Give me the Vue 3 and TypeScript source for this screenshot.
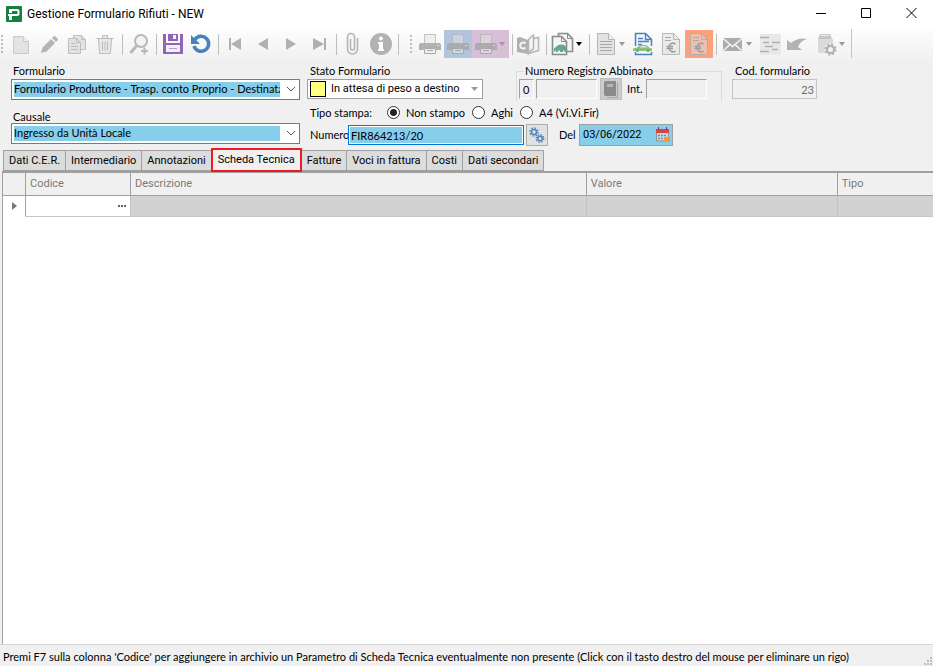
<script setup lang="ts">
import { ref } from 'vue'

interface Tool {
  icon?: string
  label?: string
  kind?: 'sep' | 'grip'
  drop?: boolean
  strong?: boolean
  tone?: string
}

const mainTools: Tool[] = [
  { kind: 'grip' },
  { icon: 'new', label: 'Nuovo' },
  { icon: 'edit', label: 'Modifica' },
  { icon: 'copy', label: 'Duplica' },
  { icon: 'trash', label: 'Elimina' },
  { kind: 'sep' },
  { icon: 'search', label: 'Cerca' },
  { kind: 'sep' },
  { icon: 'save', label: 'Salva' },
  { icon: 'undo', label: 'Annulla' },
  { kind: 'sep' },
  { icon: 'first', label: 'Primo' },
  { icon: 'prev', label: 'Precedente' },
  { icon: 'next', label: 'Successivo' },
  { icon: 'last', label: 'Ultimo' },
  { kind: 'sep' },
  { icon: 'clip', label: 'Allegati' },
  { icon: 'info', label: 'Informazioni' },
  { kind: 'sep' },
]

const extraTools: Tool[] = [
  { kind: 'grip' },
  { icon: 'print', label: 'Stampa' },
  { icon: 'print', label: 'Stampa formulario', tone: 'blue' },
  { icon: 'print', label: 'Stampa registro', tone: 'mauve', drop: true },
  { kind: 'sep' },
  { icon: 'book', label: 'Registro' },
  { kind: 'sep' },
  { icon: 'cards', label: 'Documenti collegati', drop: true, strong: true },
  { kind: 'sep' },
  { icon: 'doc', label: 'Documento', drop: true },
  { icon: 'car', label: 'Trasporto' },
  { icon: 'euro', label: 'Fattura' },
  { icon: 'euro', label: 'Fattura fornitore', tone: 'orange' },
  { kind: 'sep' },
  { icon: 'mail', label: 'Invia', drop: true },
  { icon: 'list', label: 'Dettaglio' },
  { icon: 'back', label: 'Ripristina' },
  { icon: 'setup', label: 'Impostazioni', drop: true },
]

const printModes = ['Non stampo', 'Aghi', 'A4 (Vi.Vi.Fir)']
const printMode = ref('Non stampo')
const numero = ref('FIR864213/20')
const data = ref('03/06/2022')

const tabs = ['Dati C.E.R.', 'Intermediario', 'Annotazioni', 'Scheda Tecnica', 'Fatture', 'Voci in fattura', 'Costi', 'Dati secondari']
const activeTab = ref('Scheda Tecnica')
</script>

<template>
  <div class="window">
    <svg class="sprite" aria-hidden="true">
      <symbol id="i-new" viewBox="0 0 24 24">
        <path d="M4.500 4.500h10l5 5v12h-15z" fill="#e3e3e3" stroke="#cacaca" /><path d="M14.500 4.500v5h5" fill="#f0f0f0" stroke="#cacaca" />
      </symbol>
      <symbol id="i-edit" viewBox="0 0 24 24">
        <path d="M4 21l1.500-5.500L14 7l4 4-8.500 8.500zM15 6l1.500-1.500q1-1 2 0L20.500 6.500q1 1 0 2L19 10z" fill="#b5b5b5" />
      </symbol>
      <symbol id="i-copy" viewBox="0 0 24 24">
        <path d="M8.500 3.500h8l4 4v10h-12z" fill="#e2e2e2" stroke="#c0c0c0" /><path d="M16.500 3.500v4h4" fill="none" stroke="#c0c0c0" />
        <path d="M3.500 6.500h8l4 4v11h-12z" fill="#e2e2e2" stroke="#bdbdbd" /><path d="M11.500 6.500v4h4M6 11.500h4M6 14.500h7M6 17.500h7" fill="none" stroke="#bdbdbd" />
      </symbol>
      <symbol id="i-trash" viewBox="0 0 24 24">
        <path d="M9.500 6V3.500h5V6M3.500 6.500h17M5.500 7l1 14.500h11l1-14.500" fill="#e8e8e8" stroke="#bcbcbc" /><path d="M9.500 9.500v9M12 9.500v9M14.500 9.500v9" stroke="#bcbcbc" />
      </symbol>
      <symbol id="i-search" viewBox="0 0 24 24">
        <circle cx="14" cy="9" r="6" fill="#f3f3f3" stroke="#b8b8b8" stroke-width="2" /><path d="M9.500 14l-6 7" stroke="#b8b8b8" stroke-width="3" /><path d="M17.500 15.500v7M14 19h7" stroke="#b8b8b8" stroke-width="2" />
      </symbol>
      <symbol id="i-save" viewBox="0 0 24 24">
        <path d="M2 2h3v9h14V2h3v20H2z" fill="#9065b4" /><path d="M7 2h10v7H7z" fill="#9065b4" /><path d="M12 3h3v4h-3z" fill="#f4eef8" /><path d="M5 13h14v7H5z" fill="#f4eef8" /><path d="M8 16.500h8" stroke="#b99bd0" />
      </symbol>
      <symbol id="i-undo" viewBox="0 0 24 24">
        <path d="M6 7.500A7.500 7.500 0 1 1 5 14" fill="none" stroke="#4583bd" stroke-width="3.500" /><path d="M2 3v9h9z" fill="#4583bd" />
      </symbol>
      <symbol id="i-first" viewBox="0 0 24 24"><path d="M6 6h2v12H6zM18 6v12L8 12z" fill="#b0b0b0" /></symbol>
      <symbol id="i-prev" viewBox="0 0 24 24"><path d="M17 6v12L7 12z" fill="#b0b0b0" /></symbol>
      <symbol id="i-next" viewBox="0 0 24 24"><path d="M7 6v12l10-6z" fill="#b0b0b0" /></symbol>
      <symbol id="i-last" viewBox="0 0 24 24"><path d="M17 6h2v12h-2zM6 6v12l11-6z" fill="#b0b0b0" /></symbol>
      <symbol id="i-clip" viewBox="0 0 24 24">
        <path d="M16.500 6v11a5 5 0 0 1-10 0V5a3.500 3.500 0 0 1 7 0v11a2 2 0 0 1-4 0V7" fill="none" stroke="#b4b4b4" stroke-width="1.600" />
      </symbol>
      <symbol id="i-info" viewBox="0 0 24 24">
        <circle cx="12" cy="12" r="11" fill="#b2b2b2" /><circle cx="12" cy="6.500" r="2" fill="#fff" /><path d="M9 10h5v7h1v2H9v-2h1v-5H9z" fill="#fff" />
      </symbol>
      <symbol id="i-print" viewBox="0 0 24 24">
        <path d="M6.500 11V2.500h11V11" fill="#e4e4e4" fill-opacity=".5" stroke="#b4b4b4" stroke-opacity=".8" /><path d="M1 13q0-2 2-2h18q2 0 2 2v5h-5v-2H6v2H1z" fill="#a8a8a8" fill-opacity=".9" /><path d="M6.500 16.500h11v5h-11z" fill="#ececec" fill-opacity=".5" stroke="#a8a8a8" /><path d="M9 18.500h6" stroke="#a8a8a8" /><path d="M19 13.500h2" stroke="#ddd" />
      </symbol>
      <symbol id="i-book" viewBox="0 0 24 24">
        <path d="M0 6l3-1 8 3v14L0 20z" fill="#b0b0b0" /><path d="M8.500 11.500a3 3 0 1 0 0 4" fill="none" stroke="#f4f4f4" stroke-width="2" /><path d="M11.500 21.500V8q2-3 5-5v14q-3 1-5 4.500zM16.500 6.500l5-1v13l-10 3" fill="#f4f4f4" stroke="#b4b4b4" stroke-width="1.500" />
      </symbol>
      <symbol id="i-cards" viewBox="0 0 24 24">
        <path d="M7.500 1.500h9l5 5v13h-14z" fill="#f5f5f5" stroke="#8b8b8b" stroke-width="1.600" /><path d="M16.500 1.500v5h5" fill="none" stroke="#8b8b8b" />
        <path d="M1.500 4.500h9l5 5v13h-14z" fill="#f5f5f5" stroke="#8b8b8b" stroke-width="1.600" /><path d="M10.500 4.500v5h5" fill="none" stroke="#8b8b8b" />
        <path d="M3 20q-1-4 2-5 1-2 5-2.500 4.500 0 5 3l1 4.500h-2l-1-1.500h-1V20H9v-1.500H7V20H5v-2z" fill="#62a88c" />
      </symbol>
      <symbol id="i-doc" viewBox="0 0 24 24">
        <path d="M3.500 1.500h11l6 6v15h-17z" fill="#e2e2e2" stroke="#b5b5b5" /><path d="M14.500 1.500v6h6" fill="#efefef" stroke="#b5b5b5" /><path d="M6 9.500h12M6 12.500h12M6 15.500h12M6 18.500h12" stroke="#a9a9a9" />
      </symbol>
      <symbol id="i-car" viewBox="0 0 24 24">
        <path d="M4.500 14V1.500h10l6 6V14M4.500 20v2.500h16V20" fill="#f1f5fa" stroke="#4583bd" stroke-width="1.500" /><path d="M14.500 1.500v6h6M7 6.500h5M7 9.500h11M7 12.500h4" fill="none" stroke="#4583bd" stroke-width="1.300" /><path d="M2 19v-2q1-1.500 4-1.500 2-2.500 5-2.500h4l4 3 2 .500v2.500z" fill="#8cc07a" /><path d="M8.500 15.500l2-1.500h4l2 1.500z" fill="#dcebd6" /><circle cx="6.500" cy="18.500" r="1.500" fill="#74ad60" /><circle cx="17" cy="18.500" r="1.500" fill="#74ad60" />
      </symbol>
      <symbol id="i-euro" viewBox="0 0 24 24">
        <path d="M3.500 1.500h11l6 6v15h-17z" fill="#dedede" fill-opacity=".5" stroke="#aaa" stroke-opacity=".8" /><path d="M14.500 1.500v6h6" fill="none" stroke="#aaa" stroke-opacity=".8" /><path d="M6 5.500h6M6 8.500h6" stroke="#aaa" />
        <path d="M16.500 12a4.200 4.200 0 1 0 0 7M7.500 14.500h6.500M7.500 16.500h6.500" fill="none" stroke="#9e9e9e" stroke-width="1.500" />
      </symbol>
      <symbol id="i-mail" viewBox="0 0 24 24">
        <path d="M2 6h19v13H2z" fill="#acacac" /><path d="M2 6.500l9.500 8 9.500-8M2.500 18.500l6.500-6M20.500 18.500L14 12.500" fill="none" stroke="#f5f5f5" stroke-width="1.500" />
      </symbol>
      <symbol id="i-list" viewBox="0 0 24 24">
        <path d="M2 2h21v21H2z" fill="#e8e8e8" /><path d="M2 5.500h9M5 10.500h6M7 14.500h8M2 19.500h9M14 10.500h8M14 17.500h6" stroke="#b0b0b0" stroke-width="1.500" />
      </symbol>
      <symbol id="i-back" viewBox="0 0 24 24">
        <path d="M1 8l4 3q7-6 16-4-7 2-9 8l4 3H1z" fill="#b3b3b3" />
      </symbol>
      <symbol id="i-setup" viewBox="0 0 24 24">
        <path d="M6 2h10l2 5H4z" fill="#c6c6c6" /><path d="M4 7h15v14H4z" fill="#dadada" /><path d="M7 3.500h8" stroke="#eee" />
        <circle cx="16.500" cy="17.500" r="6" fill="#f0f0f0" /><circle cx="16.500" cy="17.500" r="3.500" fill="#f4f4f4" stroke="#b0b0b0" stroke-width="2" /><circle cx="16.500" cy="17.500" r="5" fill="none" stroke="#b0b0b0" stroke-width="2" stroke-dasharray="2 1.927" />
      </symbol>
    </svg>

    <header class="titlebar">
      <svg class="logo" viewBox="0 0 16 16" aria-hidden="true">
        <rect width="16" height="16" rx="1" fill="#13823f" />
        <path d="M4 4h7q1.500 0 1.500 1.500v2q0 1.500-1.500 1.500H2" fill="none" stroke="#fff" stroke-width="2" /><path d="M3 3h3v4H3zM3 9h3v5H3z" fill="#fff" />
      </svg>
      <h1>Gestione Formulario Rifiuti - NEW</h1>
      <div class="caption">
        <button type="button" aria-label="Riduci a icona"><svg viewBox="0 0 12 12"><path d="M1 5.500h10" /></svg></button>
        <button type="button" aria-label="Ingrandisci"><svg viewBox="0 0 12 12"><path d="M1.500 .500h9v9h-9z" /></svg></button>
        <button type="button" aria-label="Chiudi"><svg viewBox="0 0 12 12"><path d="M1.500 0l10 10M11.500 0l-10 10" /></svg></button>
      </div>
    </header>

    <nav class="toolbar">
      <div v-for="(group, g) in [mainTools, extraTools]" :key="g" class="strip">
        <template v-for="(t, i) in group" :key="i">
          <span v-if="t.kind" :class="t.kind"></span>
          <button v-else type="button" class="tool" :class="t.tone" :aria-label="t.label">
            <svg class="glyph"><use :href="'#i-' + t.icon" /></svg>
            <span v-if="t.drop" class="drop" :class="{ strong: t.strong }"></span>
          </button>
        </template>
      </div>
    </nav>

    <form class="form" @submit.prevent>
      <div class="left">
        <label for="formulario">Formulario</label>
        <div class="combo">
          <select id="formulario"><option>Formulario Produttore - Trasp. conto Proprio - Destinatario</option></select>
          <svg viewBox="0 0 10 6"><path d="M1 1l4 4 4-4" /></svg>
        </div>
        <label for="causale" class="second">Causale</label>
        <div class="combo">
          <select id="causale"><option>Ingresso da Unità Locale</option></select>
          <svg viewBox="0 0 10 6"><path d="M1 1l4 4 4-4" /></svg>
        </div>
      </div>

      <div class="right">
        <div class="row top">
          <div class="stato">
            <label for="stato">Stato Formulario</label>
            <div class="state">
              <span class="swatch"></span>
              <select id="stato"><option>In attesa di peso a destino</option></select>
              <span class="drop"></span>
            </div>
          </div>
          <fieldset class="registro">
            <legend>Numero Registro Abbinato</legend>
            <input class="sunk tiny" value="0" aria-label="Registro">
            <input class="sunk" aria-label="Numero registro">
            <button type="button" class="bookbtn" aria-label="Apri registro">
              <svg viewBox="0 0 16 18"><path d="M3 1h10v15H3q-2 0-2-2V3q0-2 2-2z" fill="#8b8b8b" /><path d="M14.500 3v14.500H4" fill="none" stroke="#a5a5a5" /><path d="M4 4h6v3H4z" fill="#b8b8b8" /></svg>
            </button>
            <label for="interno">Int.</label>
            <input id="interno" class="sunk">
          </fieldset>
          <div class="cod">
            <label for="cod">Cod. formulario</label>
            <input id="cod" value="23" disabled>
          </div>
        </div>

        <div class="row modes" role="radiogroup" aria-label="Tipo stampa">
          <span class="lead">Tipo stampa:</span>
          <label v-for="m in printModes" :key="m"><input v-model="printMode" type="radio" name="stampa" :value="m">{{ m }}</label>
        </div>

        <div class="row bottom">
          <label for="numero">Numero</label>
          <input id="numero" v-model="numero" class="numero">
          <button type="button" class="gears" aria-label="Genera numero">
            <svg viewBox="0 0 16 16" fill="none" stroke="#4f86bd">
              <circle cx="5" cy="5" r="2.500" stroke-width="1.500" /><circle cx="5" cy="5" r="4" stroke-width="1.500" stroke-dasharray="1.500 1.640" />
              <circle cx="11" cy="11.500" r="2.300" stroke-width="1.500" /><circle cx="11" cy="11.500" r="3.700" stroke-width="1.500" stroke-dasharray="1.500 1.400" />
            </svg>
          </button>
          <label for="data" class="del">Del</label>
          <div class="date">
            <input id="data" v-model="data">
            <svg viewBox="0 0 16 16" aria-hidden="true">
              <path d="M1.500 3h12v11h-12z" fill="#c3dbe5" stroke="#8d9499" /><path d="M1 2h13v4H1z" fill="#d5434f" /><path d="M3.500 0v3M11.500 0v3" stroke="#8b3a42" /><path d="M3 8.500h9M3 11.500h6" stroke="#808a90" stroke-width="1.500" stroke-dasharray="2 1" /><path d="M9 10h6v5H9z" fill="#f59a3c" />
            </svg>
          </div>
        </div>
      </div>
    </form>

    <div class="tabs" role="tablist">
      <button v-for="t in tabs" :key="t" type="button" role="tab" :aria-selected="t === activeTab" :class="{ active: t === activeTab }" @click="activeTab = t">{{ t }}</button>
    </div>

    <main class="sheet">
      <table>
        <colgroup><col class="c-mark"><col class="c-code"><col class="c-desc"><col class="c-val"><col></colgroup>
        <thead>
          <tr><th></th><th>Codice</th><th>Descrizione</th><th>Valore</th><th>Tipo</th></tr>
        </thead>
        <tbody>
          <tr>
            <td class="mark"><svg viewBox="0 0 5 8"><path d="M0 0v8l5-4z" /></svg></td>
            <td class="code"><button type="button" aria-label="Scegli codice"><i></i><i></i><i></i></button></td>
            <td></td><td></td><td></td>
          </tr>
        </tbody>
      </table>
    </main>

    <footer class="status">
      <span>Premi F7 sulla colonna 'Codice' per aggiungere in archivio un Parametro di Scheda Tecnica eventualmente non presente (Click con il tasto destro del mouse per eliminare un rigo)</span>
      <svg viewBox="0 0 9 9" aria-hidden="true"><path d="M6 0h2v2H6zM3 3h2v2H3zM6 3h2v2H6zM0 6h2v2H0zM3 6h2v2H3zM6 6h2v2H6z" /></svg>
    </footer>
  </div>
</template>

<style>
body {
  margin: 0;
  background: #f0f0f0;
}
</style>

<style scoped>
* {
  box-sizing: border-box;
}
.window {
  --line: #a0a0a0;
  --sky: #87ceeb;
  --narrow: Lato, "Noto Sans", sans-serif;
  --ui: Roboto, "Noto Sans", sans-serif;
  display: flex;
  flex-direction: column;
  min-height: 100vh;
  overflow: hidden;
  background: #f0f0f0;
  color: #000;
  font: 11px/14px var(--ui);
}
button,
input,
select {
  margin: 0;
  padding: 0;
  border: 0;
  border-radius: 0;
  background: none;
  color: inherit;
  font: inherit;
  min-width: 0;
}
select {
  appearance: none;
}
.sprite {
  position: absolute;
  width: 0;
  height: 0;
}

.titlebar {
  display: flex;
  align-items: center;
  height: 29px;
  padding: 0 0 2px 6px;
  background: #fff;
}
.logo {
  width: 16px;
  height: 16px;
}
h1 {
  flex: 1;
  margin: 0;
  padding-left: 5px;
  font-size: 12px;
  line-height: 16px;
  font-weight: 400;
}
.caption {
  display: flex;
}
.caption button {
  display: grid;
  place-items: center;
  width: 45px;
  height: 26px;
}
.caption svg {
  width: 12px;
  height: 12px;
  fill: none;
  stroke: #000;
}

.toolbar {
  display: flex;
  height: 33px;
  background: linear-gradient(#fdfdfd, #f0f0f0);
}
.strip {
  display: flex;
  padding-top: 1px;
}
.strip + .strip {
  height: 29px;
  padding-left: 8px;
  padding-right: 2px;
  border-right: 1px solid #c4c4c4;
}
.grip {
  width: 6px;
  height: 18px;
  margin: 5px 0 0 1px;
  background: repeating-linear-gradient(#bdbdbd 0 2px, transparent 2px 4px) 0 0 / 2px 100% no-repeat;
}
.sep {
  width: 1px;
  height: 21px;
  margin: 4px 2px 0 3px;
  background: #bcbcbc;
}
.tool {
  display: flex;
  align-items: center;
  height: 28px;
  padding: 0 2px;
}
.glyph {
  width: 24px;
  height: 24px;
}
.drop {
  flex: none;
  width: 7px;
  height: 4px;
  background: #9a9a9a;
  clip-path: polygon(0 0, 100% 0, 50% 100%);
}
.drop.strong {
  background: #000;
}
.tool .drop {
  width: 6px;
  margin: 0 2px 0 1px;
}
.blue {
  background: #b0c4de;
}
.mauve {
  background: #d8bfd8;
}
.orange {
  background: #ffa07a;
}

.form {
  display: flex;
  gap: 7px;
  padding: 1px 8px 1px 11px;
  font-family: var(--narrow);
}
.left {
  flex: 0 0 289px;
}
.left label {
  display: block;
  height: 16px;
  padding-left: 2px;
  line-height: 16px;
}
.left label.second {
  height: 14px;
  margin-top: 9px;
}
.combo {
  position: relative;
  height: 21px;
  border: 1px solid #7a7a7a;
  background: #fff;
}
.combo select {
  display: block;
  width: 100%;
  height: 19px;
  padding: 0 19px 1px 2px;
  background: linear-gradient(var(--sky), var(--sky)) 2px 2px / calc(100% - 21px) 15px no-repeat;
}
.combo svg {
  position: absolute;
  right: 3px;
  top: 6px;
  width: 10px;
  height: 6px;
  fill: none;
  stroke: #555;
  pointer-events: none;
}
.right {
  flex: 1;
  min-width: 0;
}
.row {
  display: flex;
  align-items: center;
}
.top {
  align-items: flex-start;
  height: 39px;
}
.stato {
  flex: 0 0 176px;
  margin-right: 33px;
}
.stato label,
.cod label {
  display: block;
  height: 16px;
  padding-left: 3px;
  line-height: 16px;
}
.state {
  display: flex;
  align-items: center;
  height: 20px;
  padding: 0 4px 0 2px;
  border: 1px solid var(--line);
  background: #fff;
  font-family: var(--ui);
}
.swatch {
  flex: none;
  width: 16px;
  height: 16px;
  border: 1px solid #000;
  background: #ffff80;
}
.state select {
  flex: 1;
  padding-left: 5px;
}
.registro {
  display: flex;
  align-items: center;
  flex: 0 0 206px;
  height: 37px;
  min-width: 0;
  margin: 1px 10px 0 0;
  padding: 0 2px 1px;
  border: 1px solid #dcdcdc;
  border-bottom: 0;
}
.registro legend {
  padding: 0 1px;
  margin-left: 5px;
}
.sunk {
  width: 61px;
  height: 20px;
  border: 1px solid #fff;
  border-top-color: #a0a0a0;
  border-left-color: #a0a0a0;
}
.sunk.tiny {
  width: 15px;
  margin-right: 2px;
  padding-left: 3px;
}
.bookbtn {
  display: grid;
  place-items: center;
  width: 22px;
  height: 22px;
  margin: 0 5px 0 3px;
  border: 1px solid #bfbfbf;
  background: #ccc;
}
.bookbtn svg {
  width: 16px;
  height: 18px;
}
.registro label {
  width: 19px;
}
.cod {
  flex: 0 0 85px;
}
.cod input {
  display: block;
  width: 100%;
  height: 20px;
  padding-right: 2px;
  border: 1px solid #c4c4c4;
  color: #6d6d6d;
  text-align: right;
}
.modes {
  height: 21px;
  padding-left: 3px;
}
.lead {
  width: 77px;
}
.modes label {
  display: flex;
  align-items: center;
  gap: 6px;
  margin-right: 7px;
}
.modes input {
  appearance: none;
  width: 13px;
  height: 13px;
  border: 1px solid #333;
  border-radius: 50%;
  background: #fff;
}
.modes input:checked {
  background: radial-gradient(circle, #222 3px, #fff 4px);
}
.bottom {
  height: 24px;
  padding-left: 3px;
}
.bottom > label {
  width: 38px;
}
.numero {
  flex: 0 0 176px;
  height: 20px;
  padding: 0 2px;
  border: 1px solid #0078d7;
  background: var(--sky);
  box-shadow: inset 0 0 0 1px #fff;
}
.gears {
  display: grid;
  place-items: center;
  width: 22px;
  height: 22px;
  margin-left: 2px;
  border: 1px solid #adadad;
  background: #e1e1e1;
}
.gears svg {
  width: 16px;
  height: 16px;
}
.bottom > .del {
  width: 20px;
  margin-left: 11px;
}
.date {
  display: flex;
  align-items: center;
  width: 94px;
  height: 22px;
  padding: 0 1px 0 3px;
  border: 1px solid var(--line);
  background: var(--sky);
  font-family: var(--ui);
}
.date input {
  flex: 1;
  width: 0;
}
.date svg {
  flex: none;
  width: 16px;
  height: 16px;
}

.tabs {
  display: flex;
  align-items: flex-end;
  height: 23px;
  padding-left: 3px;
}
.tabs button {
  height: 21px;
  margin-right: -1px;
  padding: 0 5px;
  border: 1px solid var(--line);
  background: #dcdcdc;
  white-space: nowrap;
}
.tabs .active {
  z-index: 1;
  height: 24px;
  margin-bottom: -1px;
  border: 2px solid #ed1c24;
  background: #f0f0f0;
}

.sheet {
  flex: 1;
  margin-left: 2px;
  border-top: 2px solid var(--line);
  border-left: 1px solid var(--line);
  background: #fff;
}
table {
  width: 100%;
  table-layout: fixed;
  border-collapse: separate;
  border-spacing: 0;
}
.c-mark {
  width: 23px;
}
.c-code {
  width: 105px;
}
.c-desc {
  width: 49%;
}
.c-val {
  width: 27%;
}
th,
td {
  padding: 0 4px;
  border-right: 1px solid var(--line);
  border-bottom: 1px solid var(--line);
}
th {
  height: 23px;
  background: #f0f0f0;
  color: #7a7a7a;
  font-weight: 400;
  text-align: left;
}
td {
  height: 21px;
  border-color: #c4c4c4;
  background: #d2d2d2;
}
th:last-child,
td:last-child {
  border-right: 0;
}
td.mark {
  border-right-color: var(--line);
  border-bottom-color: #fff;
  background: #fff;
}
.mark svg {
  display: block;
  width: 5px;
  height: 8px;
  margin-left: 5px;
  fill: #777;
}
td.code {
  background: #fff;
}
.code button {
  display: flex;
  gap: 1px;
  margin-left: auto;
}
.code i {
  width: 2px;
  height: 2px;
  background: #666;
}

.status {
  display: flex;
  align-items: center;
  justify-content: space-between;
  height: 22px;
  padding: 3px 0 0 3px;
  border-top: 1px solid #d5d5d5;
  font-family: var(--narrow);
  white-space: nowrap;
}
.status svg {
  flex: none;
  align-self: flex-end;
  width: 9px;
  height: 9px;
  fill: #bcbcbc;
}
</style>
